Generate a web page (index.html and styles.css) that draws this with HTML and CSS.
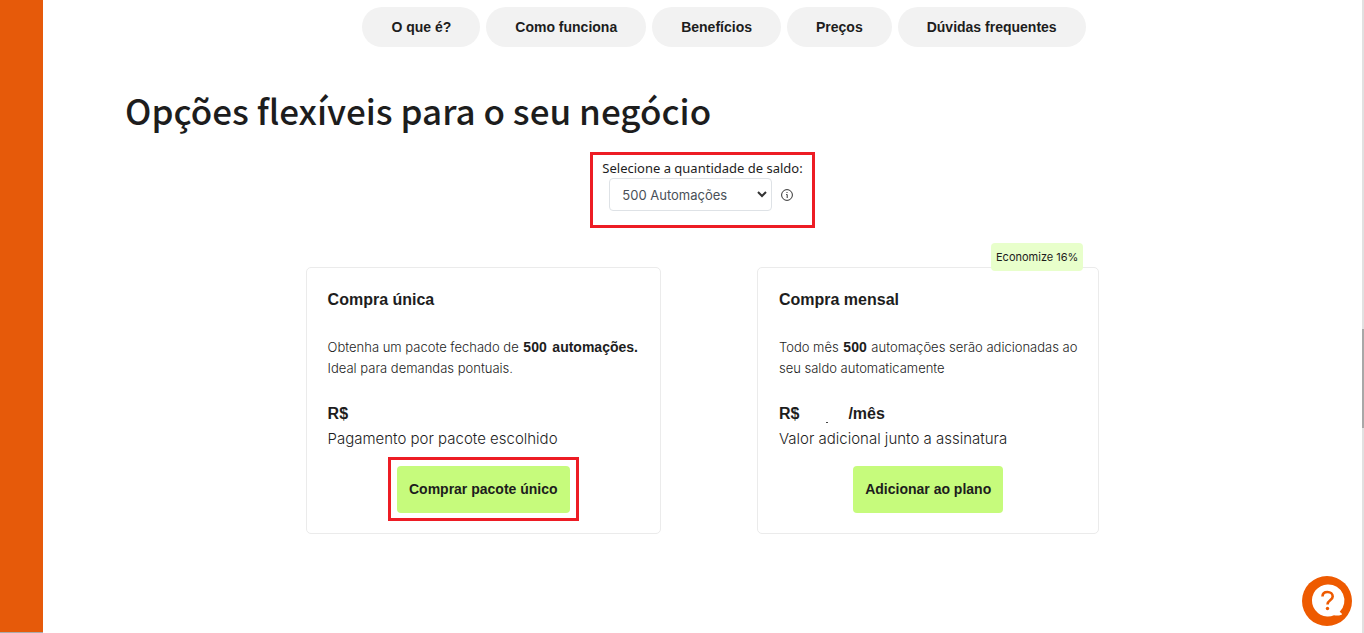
FILE: index.html
```html
<!DOCTYPE html>
<html lang="pt-BR">
<head>
  <meta charset="UTF-8">
  <meta name="viewport" content="width=device-width, initial-scale=1.0">
  <title>Opções flexíveis para o seu negócio</title>
  <link rel="stylesheet" href="styles.css">
</head>
<body>
  <div class="page">
    <aside class="sidebar"></aside>

    <main class="content">
      <nav class="menu">
        <a href="#o-que-e">O que é?</a>
        <a href="#como-funciona">Como funciona</a>
        <a href="#beneficios">Benefícios</a>
        <a href="#precos">Preços</a>
        <a href="#duvidas">Dúvidas frequentes</a>
      </nav>

      <h1>Opções flexíveis para o seu negócio</h1>

      <div class="saldo highlight">
        <label for="saldo">Selecione a quantidade de saldo:</label>
        <div class="saldo-row">
          <div class="select-box">
            <select id="saldo">
              <option>500 Automações</option>
            </select>
            <svg class="arrow" viewBox="0 0 10 7" aria-hidden="true"><path d="M1 1l4 4 4-4"/></svg>
          </div>
          <svg class="info" viewBox="0 0 12 12" aria-hidden="true">
            <circle cx="6" cy="6" r="5.400"/>
            <path d="M5.200 5.500h1v3.500M6 3v1"/>
          </svg>
        </div>
      </div>

      <div class="cards">
        <section class="card">
          <h2>Compra única</h2>
          <p class="text">Obtenha um pacote fechado de <b>500</b> <b>automações.</b><br>Ideal para demandas pontuais.</p>
          <p class="price">R$</p>
          <p class="detail">Pagamento por pacote escolhido</p>
          <div class="action highlight">
            <button type="button">Comprar pacote único</button>
          </div>
        </section>

        <section class="card">
          <span class="badge">Economize 16%</span>
          <h2>Compra mensal</h2>
          <p class="text">Todo mês <b>500</b> automações serão adicionadas ao<br>seu saldo automaticamente</p>
          <p class="price"><span>R$</span><span class="comma"></span><span>/mês</span></p>
          <p class="detail">Valor adicional junto a assinatura</p>
          <div class="action">
            <button type="button">Adicionar ao plano</button>
          </div>
        </section>
      </div>
    </main>
  </div>

  <button type="button" class="help" aria-label="Ajuda">
    <svg viewBox="0 0 50 50" aria-hidden="true">
      <circle cx="25" cy="25" r="25" fill="#ee5a00"/>
      <path d="M25.500 8.500a16 16 0 1 0 6.500 30.800c2.500.4 5 .3 7.500-.6q1-.6.2-1.300l-2-1.600A16 16 0 0 0 25.500 8.500z" fill="#fff"/>
      <path d="M20.500 20.500c0-3 2-4.500 5-4.500s5.200 1.800 5.200 4.500c0 4-5.200 3.600-5.200 8" fill="none" stroke="#ee5a00" stroke-width="2.600"/>
      <circle cx="25.500" cy="32.500" r="1.700" fill="#ee5a00"/>
    </svg>
  </button>
  <div class="scroll-track"><div class="scroll-thumb"></div></div>
</body>
</html>
```

FILE: styles.css
```css
* {
  box-sizing: border-box;
}
body {
  margin: 0;
  font-family: Inter, "Liberation Sans", sans-serif;
  color: #1d1d1d;
  background-color: #fff;
  overflow: hidden;
}
.page {
  display: flex;
  min-height: 100vh;
}
.sidebar {
  flex: 0 0 43px;
  background-color: #e65a0a;
  border-bottom: 1px solid #aaa;
}
.content {
  flex: 1;
  padding-right: 2px;
}
.menu {
  display: flex;
  justify-content: center;
  gap: 6px;
  padding: 7px 0 0 43px;
}
.menu a {
  padding: 0 29px;
  border-radius: 20px;
  background-color: #f2f2f2;
  color: #1d1d1d;
  font: bold 14px/40px "Liberation Sans", Arial, sans-serif;
  text-decoration: none;
}
h1 {
  margin: 33px 0 0 82px;
  font: 500 35px/60px "Noto Sans CJK JP", sans-serif;
}
.highlight {
  border: 3px solid #ed1c24;
}
.saldo {
  width: fit-content;
  margin: 12px auto 0;
  padding: 4px 9px 14px;
}
.saldo label {
  display: block;
  font: 13px/19px "Noto Sans", sans-serif;
}
.saldo-row {
  display: flex;
  align-items: center;
  gap: 9px;
  padding-left: 7px;
}
.select-box {
  position: relative;
}
.select-box select {
  appearance: none;
  width: 163px;
  height: 33px;
  padding: 0 12px;
  border: 1px solid #dee2e6;
  border-radius: 4px;
  background-color: #fff;
  color: #495057;
  font: 13px Inter, sans-serif;
}
.arrow {
  position: absolute;
  right: 5px;
  top: 13px;
  width: 10px;
  height: 7px;
  fill: none;
  stroke: #333;
  stroke-width: 2;
}
.info {
  width: 12px;
  height: 12px;
  fill: none;
  stroke: #333;
  stroke-width: 1;
}
.cards {
  display: flex;
  justify-content: center;
  gap: 96px;
  margin-top: 39px;
}
.card {
  position: relative;
  display: flex;
  flex-direction: column;
  padding: 21px 21px 20px;
  border: 1px solid #ebebeb;
  border-radius: 5px;
}
h2 {
  margin: 0;
  font: bold 16px/22px "Liberation Sans", Arial, sans-serif;
}
.text {
  margin: 26px 0 0;
  font-size: 13px;
  font-weight: 300;
  line-height: 21px;
}
.text b {
  margin: 0 1px;
  font: bold 14px/14px "Liberation Sans", Arial, sans-serif;
}
.price {
  display: flex;
  margin: 24px 0 0;
  font: bold 16px/22px "Liberation Sans", Arial, sans-serif;
}
.comma {
  align-self: flex-end;
  width: 2px;
  height: 1px;
  margin: 0 20px 2px 27px;
  background-color: #444;
}
.detail {
  margin: 3px 0 0;
  font-size: 15px;
  font-weight: 300;
  line-height: 22px;
}
.action {
  align-self: center;
  margin-top: 16px;
}
.action.highlight {
  margin: 7px 0 -8px;
  padding: 6px 6px 5px;
}
.action button {
  display: block;
  height: 47px;
  padding: 0 12px 2px;
  border: none;
  border-radius: 4px;
  background-color: #c6fb7c;
  color: #1d1d1d;
  font: bold 14px "Liberation Sans", Arial, sans-serif;
  cursor: pointer;
}
.badge {
  position: absolute;
  top: -25px;
  right: 15px;
  padding: 0 5px;
  border-radius: 4px;
  background-color: #e8ffcb;
  font-size: 11px;
  line-height: 28px;
}
.help {
  position: fixed;
  right: 12px;
  bottom: 7px;
  width: 50px;
  height: 50px;
  padding: 0;
  border: none;
  background: none;
  cursor: pointer;
}
.help svg {
  display: block;
}
.scroll-track {
  position: fixed;
  top: 0;
  right: 0;
  bottom: 0;
  width: 2px;
  padding-top: 329px;
  background-color: #e1e1e1;
}
.scroll-thumb {
  height: 99px;
  background-color: #a8a8a8;
}
```
